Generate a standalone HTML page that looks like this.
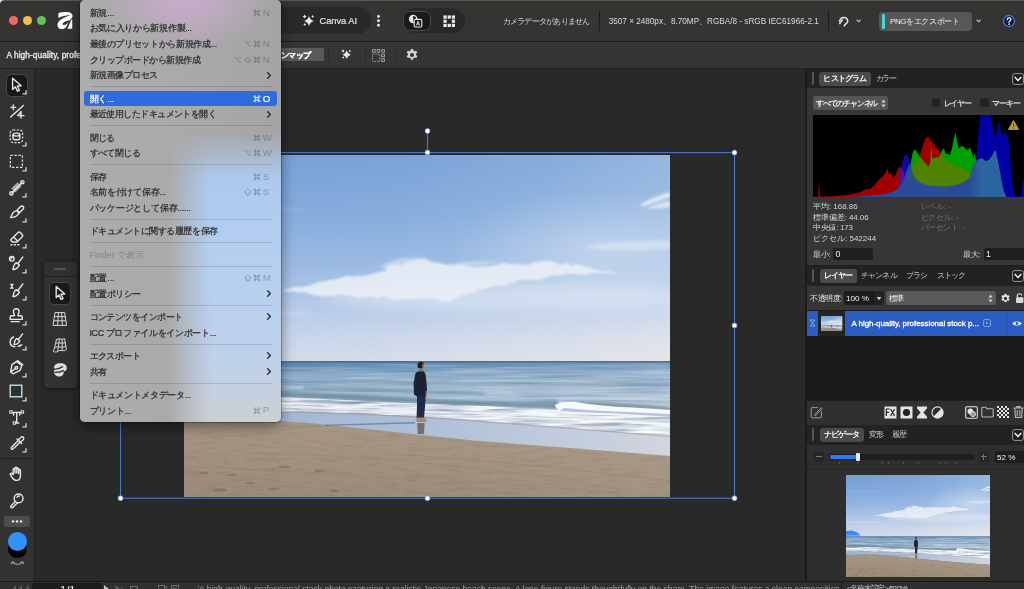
<!DOCTYPE html>
<html lang="ja">
<head>
<meta charset="utf-8">
<title>Affinity</title>
<style>
*{box-sizing:border-box;margin:0;padding:0}
html,body{width:1024px;height:589px;overflow:hidden;background:#2a2a2a}
body{font-family:"Liberation Sans",sans-serif;font-size:9px;color:#ddd;position:relative;-webkit-font-smoothing:antialiased}
.abs{position:absolute}
#titlebar{left:0;top:0;width:1024px;height:42px;background:#353433;border-bottom:1px solid #1c1c1c}
#ctxbar{left:0;top:42px;width:1024px;height:26.5px;background:#353535;border-bottom:1px solid #1e1e1e}
#tools{left:0;top:68px;width:35px;height:513px;background:#323232;border-right:1px solid #1f1f1f}
#canvas{left:35px;top:68px;width:770px;height:513px;background:#292929}
#rpanel{left:805px;top:68px;width:219px;height:513px;background:#1f1f1f}
#status{left:0;top:580.6px;width:1024px;height:10px;background:#2f2f2f;border-top:1px solid #1a1a1a}
.tl{width:9px;height:9px;border-radius:50%;top:16px}
.pill{background:#292929;border-radius:13.5px;top:7.4px;height:26.6px}
.ttxt{top:15px;font-size:8.6px;color:#dcdcdc;white-space:nowrap;line-height:12px}
.vsep{width:1px;background:#1c1c1c}
.tab{background:#4a4a4a;border-radius:3px;color:#fff;font-weight:bold;font-size:8.4px;line-height:13.5px;text-align:center;white-space:nowrap;overflow:hidden}
.tabx{color:#c8c8c8;font-size:8.4px;line-height:13.5px;white-space:nowrap}
.jt{font-size:8.4px;line-height:12px;white-space:nowrap}
.st{font-size:8.8px;line-height:12px;white-space:nowrap;color:#d6d6d6}
/* menu */
#menu{left:80px;top:0;width:201px;height:422px;border-radius:5px;overflow:hidden;padding-top:4.8px;
 box-shadow:0 4px 14px rgba(0,0,0,.45),0 0 0 .5px rgba(0,0,0,.5);background:#acacac;color:#2c2c2c;font-size:9.2px;-webkit-text-stroke:.22px #2c2c2c}
#menu .bg{position:absolute;left:0;top:0;width:100%;height:100%}
.mi{position:relative;height:15.6px;line-height:15.6px;padding-left:9.5px;white-space:nowrap}
.mi>span:first-child{position:relative;top:1.1px}
.mi .sc{position:absolute;right:8.6px;top:0;color:rgba(40,40,40,.32);letter-spacing:.3px;-webkit-text-stroke:0}
.mi .ar{position:absolute;right:9.3px;top:4.4px;width:6px;height:7px}
.mi.dis{color:rgba(40,40,40,.3);-webkit-text-stroke:0}
.mi.hl{color:#fff;-webkit-text-stroke:.22px #fff}
.mi.hl:before{content:"";position:absolute;left:3.5px;right:4px;top:0;bottom:0;border-radius:3px;background:#2f6bdc;z-index:-1}
.mi.hl .sc{color:#fff;-webkit-text-stroke:.2px #fff}
.ms{position:relative;height:7.8px}
.ms:before{content:"";position:absolute;left:9.5px;right:9.5px;top:3.5px;height:1px;background:rgba(0,0,0,.13)}
.mi .sc svg.k{display:inline-block;vertical-align:-0.9px;margin-right:1.8px}
.mi .sc b{font-weight:normal;display:inline-block;width:9.6px;text-align:left;font-size:9.6px;letter-spacing:0}
#menu .bg{background:
 radial-gradient(ellipse 80px 50px at 108px -2px, rgba(208,172,212,.85), rgba(208,172,212,.5) 45%, rgba(208,172,212,0) 100%),
 linear-gradient(90deg,#acacac 0,#a9a9a9 60%,#a4a4a6 100%)}
#menu .bh{position:absolute;left:0;top:0;width:100%;height:100%;-webkit-mask-image:linear-gradient(90deg,transparent 88px,rgba(0,0,0,.5) 108px,#000 132px);mask-image:linear-gradient(90deg,transparent 88px,rgba(0,0,0,.5) 108px,#000 132px)}
#menu .bv{position:absolute;left:0;top:0;width:100%;height:100%;-webkit-mask-image:linear-gradient(180deg,transparent 132px,rgba(0,0,0,.5) 154px,#000 180px);mask-image:linear-gradient(180deg,transparent 132px,rgba(0,0,0,.5) 154px,#000 180px);
 background:linear-gradient(180deg,#a9c6ea 0,#adcaee 180px,#b7d0f0 280px,#bed1ea 360px,#c8d0dc 400px,#ccd0d6 422px)}
.mwrap{position:relative;z-index:1}
</style>
</head>
<body>
<div id="root" style="position:absolute;left:0;top:0;width:1024px;height:589px;overflow:hidden;will-change:transform">
<div id="titlebar" class="abs"></div>
<div id="ctxbar" class="abs"></div>
<div id="tools" class="abs"></div>
<div id="canvas" class="abs"></div>
<div id="rpanel" class="abs"></div>
<div id="status" class="abs"></div>
<div class="abs" id="ctxline" style="left:0;top:67.8px;width:1024px;height:1.2px;background:#222"></div>
<div class="abs" id="topline" style="left:0;top:0;width:1024px;height:1.2px;background:linear-gradient(180deg,#66665f,#4a4a47)"></div>
<svg class="abs" style="left:0;top:0" width="5" height="5" viewBox="0 0 5 5"><path d="M0 0 H4.2 C1.6 .4 .4 1.6 0 4.2Z" fill="#e8e8e8"/></svg>
<!--PHOTO-->
<svg width="0" height="0" style="position:absolute">
<defs>
<linearGradient id="skyV" x1="0" y1="0" x2="0" y2="1">
 <stop offset="0" stop-color="#749fd6"/>
 <stop offset=".3" stop-color="#84abdc"/>
 <stop offset=".52" stop-color="#98b8e2"/>
 <stop offset=".72" stop-color="#b3c9e8"/>
 <stop offset=".88" stop-color="#c6d4eb"/>
 <stop offset="1" stop-color="#d2dbea"/>
</linearGradient>
<linearGradient id="skyH" x1="0" y1="0" x2="1" y2="0">
 <stop offset="0" stop-color="#fff" stop-opacity="0"/>
 <stop offset=".45" stop-color="#fff" stop-opacity=".04"/>
 <stop offset=".75" stop-color="#fff" stop-opacity=".13"/>
 <stop offset="1" stop-color="#fff" stop-opacity=".24"/>
</linearGradient>
<radialGradient id="hazeR"><stop offset="0" stop-color="#e9eef6" stop-opacity=".4"/><stop offset=".5" stop-color="#e9eef6" stop-opacity=".2"/><stop offset="1" stop-color="#e9eef6" stop-opacity="0"/></radialGradient>
<linearGradient id="hzn" x1="0" y1="0" x2="1" y2="0">
 <stop offset="0" stop-color="#e2e2e8" stop-opacity="0"/>
 <stop offset=".2" stop-color="#e2e2e8" stop-opacity=".05"/>
 <stop offset=".55" stop-color="#e4e3e7" stop-opacity=".4"/>
 <stop offset="1" stop-color="#e8e5e4" stop-opacity=".8"/>
</linearGradient>
<linearGradient id="hznV" x1="0" y1="0" x2="0" y2="1">
 <stop offset="0" stop-color="#000"/><stop offset="1" stop-color="#fff"/>
</linearGradient>
<mask id="hznM"><rect x="0" y="150" width="486" height="58" fill="url(#hznV)"/></mask>
<linearGradient id="seaV" x1="0" y1="206" x2="0" y2="252" gradientUnits="userSpaceOnUse">
 <stop offset="0" stop-color="#4f7ea8"/>
 <stop offset=".1" stop-color="#668fb6"/>
 <stop offset=".3" stop-color="#88a8c5"/>
 <stop offset=".55" stop-color="#9db7ce"/>
 <stop offset="1" stop-color="#adc2d4"/>
</linearGradient>
<linearGradient id="seaH" x1="0" y1="0" x2="1" y2="0">
 <stop offset="0" stop-color="#fff" stop-opacity="0"/>
 <stop offset=".5" stop-color="#fff" stop-opacity=".04"/>
 <stop offset="1" stop-color="#fff" stop-opacity=".16"/>
</linearGradient>
<linearGradient id="sandV" x1="0" y1="262" x2="0" y2="342" gradientUnits="userSpaceOnUse">
 <stop offset="0" stop-color="#a69685"/>
 <stop offset=".35" stop-color="#a39380"/>
 <stop offset="1" stop-color="#9a8a77"/>
</linearGradient>
<linearGradient id="wetH" x1="0" y1="0" x2="1" y2="0">
 <stop offset="0" stop-color="#9cb3d2"/>
 <stop offset=".5" stop-color="#adbfd8"/>
 <stop offset=".8" stop-color="#bfcadb"/>
 <stop offset="1" stop-color="#cdd2db"/>
</linearGradient>
<filter id="b6" x="-20%" y="-60%" width="140%" height="220%"><feGaussianBlur stdDeviation="6"/></filter>
<filter id="b3" x="-20%" y="-60%" width="140%" height="220%"><feGaussianBlur stdDeviation="1.5"/></filter>
<filter id="b1" x="-10%" y="-60%" width="120%" height="220%"><feGaussianBlur stdDeviation="1"/></filter>
<filter id="b05" x="-10%" y="-60%" width="120%" height="220%"><feGaussianBlur stdDeviation=".5"/></filter>
<filter id="cloudF" x="-10%" y="-60%" width="120%" height="220%">
 <feTurbulence type="fractalNoise" baseFrequency="0.035 0.09" numOctaves="3" seed="9" result="t"/>
 <feDisplacementMap in="SourceGraphic" in2="t" scale="9" xChannelSelector="R" yChannelSelector="G"/>
 <feGaussianBlur stdDeviation="1.1"/>
</filter>
<filter id="foamN" x="0" y="0" width="100%" height="100%" color-interpolation-filters="sRGB">
 <feTurbulence type="fractalNoise" baseFrequency="0.018 0.3" numOctaves="3" seed="7"/>
 <feColorMatrix type="matrix" values="0 0 0 0 1  0 0 0 0 1  0 0 0 0 1  3.2 0 0 0 -1.35"/>
</filter>
<filter id="foamD" x="0" y="0" width="100%" height="100%" color-interpolation-filters="sRGB">
 <feTurbulence type="fractalNoise" baseFrequency="0.02 0.35" numOctaves="2" seed="21"/>
 <feColorMatrix type="matrix" values="0 0 0 0 .42  0 0 0 0 .52  0 0 0 0 .62  3 0 0 0 -1.45"/>
</filter>
<filter id="seaN" x="0" y="0" width="100%" height="100%" color-interpolation-filters="sRGB">
 <feTurbulence type="fractalNoise" baseFrequency="0.012 0.4" numOctaves="3" seed="3"/>
 <feColorMatrix type="matrix" values="0 0 0 0 .9  0 0 0 0 .94  0 0 0 0 .98  2.4 0 0 0 -1.1"/>
</filter>
<filter id="seaD" x="0" y="0" width="100%" height="100%" color-interpolation-filters="sRGB">
 <feTurbulence type="fractalNoise" baseFrequency="0.012 0.4" numOctaves="3" seed="11"/>
 <feColorMatrix type="matrix" values="0 0 0 0 .22  0 0 0 0 .36  0 0 0 0 .5  2.4 0 0 0 -1.15"/>
</filter>
<filter id="sandN" x="0" y="0" width="100%" height="100%" color-interpolation-filters="sRGB">
 <feTurbulence type="fractalNoise" baseFrequency="0.05 0.3" numOctaves="3" seed="5"/>
 <feColorMatrix type="matrix" values="0 0 0 0 .42  0 0 0 0 .35  0 0 0 0 .28  1.6 0 0 0 -.78"/>
</filter>
<clipPath id="foamClip"><path d="M0 241 C40 241 80 241 120 243 C180 246 240 249 296 251 C340 253 400 256 486 260 L486 281 C420 276 360 271 296 266 C230 261 160 258 97 256.6 C60 256 30 256 0 256Z"/></clipPath>
<clipPath id="sandClip"><path d="M0 267 L97 266 C130 268 160 271.5 191 275 L289 285.4 L386.6 293 L486 301 L486 342 L0 342Z"/></clipPath>
<symbol id="photo" viewBox="0 0 486 342" preserveAspectRatio="none">
 <rect width="486" height="208" fill="url(#skyV)"/>
 <rect width="486" height="208" fill="url(#skyH)"/>
 <rect y="150" width="486" height="58" fill="url(#hzn)" mask="url(#hznM)"/>
 <!-- haze -->
 <ellipse cx="420" cy="95" rx="150" ry="60" fill="url(#hazeR)"/>
 <ellipse cx="330" cy="142" rx="190" ry="14" fill="#e4eaf4" opacity=".55" filter="url(#b6)"/>
 <ellipse cx="60" cy="159" rx="70" ry="3" fill="#e4eaf4" opacity=".3" filter="url(#b3)"/>
 <ellipse cx="60" cy="55" rx="60" ry="4" fill="#e4eaf4" opacity=".1" filter="url(#b3)"/>
 <!-- main cloud -->
 <g filter="url(#cloudF)" fill="#ecf0f7" opacity=".9">
  <path d="M99 135.5 C118 131 136 128 154 124.6 C172 121 188 119 200 116 C205 112 208 110 212 109 C222 105 236 103.5 247 104.5 C256 105.5 262 111 270 111.4 C290 111 310 109.4 328 109 C345 108.4 358 107.8 369 108 C380 108.4 388 109.4 394 110.4 C408 112 422 114.4 434 116.4 C418 117.6 402 118.2 386 119.2 C370 120.6 354 122.4 340 124.8 C322 128 306 131.4 293 134.8 C284 138 277 141.4 270 143.4 C261 145.6 251 145.4 241 145 C222 144.6 202 143 183 142 C165 141.4 147 141.4 131 140.5 C119 139.6 107 138.6 99 137Z" opacity=".95"/>
 </g>
 <g filter="url(#b3)" fill="#eef2f8" opacity=".55"><path d="M196 112 C206 106 220 102 236 102 C226 105 214 109 204 114Z"/><path d="M262 110 C280 106 300 106 320 107 C300 109 280 111 266 113Z"/></g>
 <g filter="url(#b3)" fill="#f5f7fb">
  <path d="M456 50 C466 44 476 40 486 37 L486 42 C476 45 468 48 460 51Z" opacity=".85"/>
  <path d="M462 54 C470 50 478 47 486 46 L486 52 C478 53 470 54 462 54Z" opacity=".7"/>
  <path d="M398 92 C425 87 458 85 486 85 L486 94 C458 96 425 96 398 92Z" opacity=".38"/>
 </g>
 <!-- sea -->
 <rect y="206" width="486" height="60" fill="url(#seaV)"/>
 <rect y="206" width="486" height="60" fill="url(#seaH)"/>
 <rect y="209" width="486" height="40" filter="url(#seaN)" opacity=".4"/>
 <rect y="209" width="486" height="40" filter="url(#seaD)" opacity=".3"/>
 <rect y="206.2" width="486" height="1.3" fill="#3c6a94" opacity=".9"/>
 <g filter="url(#b1)">
  <path d="M0 218 L486 217 L486 219 L0 220.5Z" fill="#b5c8d8" opacity=".22"/>
  <path d="M0 226 C160 225 320 229 486 228 L486 230 C320 231 160 227 0 228.5Z" fill="#4c7496" opacity=".35"/>
  <path d="M0 235 C50 233 100 236 150 238 C200 241 250 244 300 246 C330 247 350 246 372 245 L380 254 C350 253 320 252 290 251 C240 249 180 246 120 243 C80 241 40 241 0 241Z" fill="#55788f" opacity=".6"/>
  <path d="M120 231 C180 232 240 236 300 238 L300 240 C240 239 180 235 120 234Z" fill="#587d9c" opacity=".5"/>
  <path d="M380 247 C420 246 460 250 486 252 L486 256 C460 254 420 252 380 252Z" fill="#5d7a86" opacity=".6"/>
 </g>
 <!-- wet sand -->
 <path d="M0 254 L97 255 L296 264 L486 279 L486 302 L386 294 L289 286 L191 276 L97 267 L0 268Z" fill="url(#wetH)"/>
 <!-- foam -->
 <g filter="url(#b05)">
  <path d="M0 241 C40 241 80 241 120 243 C180 246 240 249 296 251 C340 253 400 256 486 260 L486 281 C420 276 360 271 296 266 C230 261 160 258 97 256.6 C60 256 30 256 0 256Z" fill="#cfd8e3"/>
  <path d="M0 246 C60 246 140 249 220 253 C300 257 400 262 486 268 L486 271 C400 266 300 261 220 257 C140 253 60 250 0 250Z" fill="#f0f3f7" opacity=".75"/>
  <path d="M0 243 C60 243 120 245 200 249 L200 250.5 C120 247 60 245 0 245Z" fill="#8ea3b8" opacity=".6"/>
  <path d="M0 255 C40 255 70 255.4 97 256 C160 257.4 230 260.4 296 265.4 C360 270.4 420 275.4 486 280.4 L486 282 C420 277 360 272 296 267 C230 262 160 259 97 257.6 C60 257 30 257 0 257Z" fill="#9a9088" opacity=".6"/>
 </g>
 <g clip-path="url(#foamClip)"><rect y="238" width="486" height="46" filter="url(#foamD)" opacity=".7"/><rect y="238" width="486" height="46" filter="url(#foamN)" opacity=".9"/></g>
 <!-- crest -->
 <g filter="url(#b05)">
  <path d="M371 250 C378 246 388 246 398 248 C420 252 450 252 486 255 L486 262 C450 261 410 260 385 259 C378 258 372 255 371 250Z" fill="#f7f9fc"/>
  <path d="M376 256 C400 258 440 258 486 262 L486 259 C450 257 410 256 380 253Z" fill="#9db2dc" opacity=".75"/>
 </g>
 <!-- sand -->
 <path d="M0 267 L97 266 C130 268 160 271.5 191 275 L289 285.4 L386.6 293 L486 301 L486 342 L0 342Z" fill="url(#sandV)"/>
 <rect y="262" width="486" height="80" fill="url(#seaH)" opacity=".5"/>
 <g clip-path="url(#sandClip)"><rect y="264" width="486" height="78" filter="url(#sandN)" opacity=".26"/></g>
 <g stroke="#8a7864" stroke-width=".8" fill="none" opacity=".38">
  <path d="M60 298 C160 300 280 310 400 326"/>
  <path d="M0 312 C100 314 200 322 300 334"/>
  <path d="M220 300 C320 306 420 318 486 326"/>
  <path d="M240 322 C320 328 380 334 440 338"/>
 </g>
 <g fill="#7a6854" opacity=".55">
  <ellipse cx="20" cy="318" rx="5" ry="1.3"/><ellipse cx="48" cy="320" rx="5" ry="1.3"/>
  <ellipse cx="100" cy="312" rx="6" ry="1.3"/><ellipse cx="135" cy="316" rx="5" ry="1.2"/>
  <ellipse cx="36" cy="335" rx="7" ry="1.6"/><ellipse cx="90" cy="334" rx="6" ry="1.4"/>
  <ellipse cx="150" cy="336" rx="5" ry="1.2"/><ellipse cx="66" cy="328" rx="5" ry="1.2"/>
 </g>
 <!-- person -->
 <path d="M141 269.8 L231 267 L231 268.6 L141 271Z" fill="#4f6488" opacity=".6"/>
 <g>
  <path d="M233.2 268 L240.6 268 L240 279 L233.8 279Z" fill="#6a5950" opacity=".8"/>
  <path d="M232.4 262 L240.6 262 L242.6 265.6 L242.4 267 L232.6 267Z" fill="#a58673"/>
  <path d="M233 240 L241.8 240 L241 252 L240 262.4 L232.6 262.4 L233 252Z" fill="#1f2a48"/>
  <path d="M231.4 218.4 C233 216.2 236 215.6 238.6 216 C240.6 216.4 241.4 218.4 241.8 221 L243 234 L242.6 240.6 L240 241.6 L233 241.6 L230 239.6 L229.6 228Z" fill="#1c2234"/>
  <path d="M241.8 236 L243.2 236 L243 242.6 L241.6 242.6Z" fill="#a58673"/>
  <ellipse cx="236.8" cy="210.2" rx="3.3" ry="3.5" fill="#1d1f27"/>
  <path d="M238.6 208.6 C239.8 208.6 240.4 210 240.2 211.6 C240 213 239.2 213.8 238.2 213.6Z" fill="#a07f6c"/>
  <rect x="235" y="213" width="3.4" height="3.4" fill="#8b6e5e"/>
 </g>
</symbol>
</defs>
</svg>
<svg class="abs" style="left:184px;top:155px" width="486" height="342"><use href="#photo" width="486" height="342"/></svg>
<!--/PHOTO-->
<!--SEL-->
<svg class="abs" style="left:0;top:0" width="1024" height="589" viewBox="0 0 1024 589">
 <g fill="none" stroke="#4a78c8" stroke-width="1.1">
  <rect x="120.5" y="152.6" width="614" height="345.6"/>
  <path d="M427.5 131 V152.6"/>
 </g>
 <g fill="#fff" stroke="#5a8ae0" stroke-width=".7">
  <circle cx="427.5" cy="131" r="2.5"/>
  <circle cx="427.5" cy="152.6" r="2.5"/>
  <circle cx="734.5" cy="152.6" r="2.5"/>
  <circle cx="734.5" cy="325.4" r="2.5"/>
  <circle cx="734.5" cy="498.2" r="2.5"/>
  <circle cx="427.5" cy="498.2" r="2.5"/>
  <circle cx="120.5" cy="498.2" r="2.5"/>
  <circle cx="120.5" cy="325.4" r="2.5"/>
  <circle cx="120.5" cy="152.6" r="2.5"/>
 </g>
</svg>
<!-- STATUS -->
<div class="abs" style="left:31.5px;top:582.6px;width:70px;height:8px;background:#1c1c1c;border-radius:2px 2px 0 0"></div>
<div class="abs" style="left:0;top:583.4px;width:1024px;height:12px;font-size:8px;line-height:12px;color:#c8c8c8;white-space:nowrap">
 <span class="abs" style="left:60px;top:.8px;color:#f0f0f0;font-size:10px"><span style="font-size:11.15px;font-weight:normal;letter-spacing:0.00px">1/1</span></span>
 <span class="abs" style="left:197.5px;color:#a0a0a0"><span style="font-size:8.49px;font-weight:normal;letter-spacing:0.00px">'A high-quality, professional stock photo capturing a realistic Japanese beach scene. A lone figure stands thoughtfully on the shore. The image features a clean composition</span></span>
 <span class="abs" style="left:847px;color:#d0d0d0"><span style="font-size:7.6px;font-weight:normal;letter-spacing:-1.19px">&lt;名称未設定&gt; (52.0%)</span></span>
</div>
<svg class="abs" style="left:0;top:583.6px" width="200" height="7" viewBox="0 0 200 7">
 <g fill="#5a5a5a"><path d="M16 6 L11 6 L16 1Z M22 6 L17 6 L22 1Z"/><path d="M29 6 L24 6 L29 1Z"/></g>
 <path d="M104 1 L110 6 L104 8Z" fill="#c8c8c8"/><path d="M116 2 L121 6 L116 8Z M122 2 V7" fill="#5a5a5a" stroke="#5a5a5a" stroke-width="1"/>
 <g fill="none" stroke="#6e6e6e" stroke-width="1"><rect x="130.5" y="2.5" width="7" height="6"/><rect x="158.5" y="1.5" width="6" height="7"/><path d="M165 3 H167 V8"/><rect x="171.5" y="1.5" width="7" height="7"/><path d="M173 4 H177 M173 6.5 H177"/></g>
</svg>
<div class="abs" style="left:841px;top:581.5px;width:1px;height:9px;background:#1c1c1c"></div>
<!--/SEL-->
<!-- TITLEBAR CONTENT -->
<div class="abs tl" style="left:9px;background:#ee6a5f"></div>
<div class="abs tl" style="left:23px;background:#f5bd4f"></div>
<div class="abs tl" style="left:37px;background:#61c455"></div>
<svg class="abs" style="left:50px;top:6px" width="30" height="30" viewBox="0 0 589 589" fill="#fff">
 <path d="M165 140 C250 115 380 108 425 150 C452 176 446 216 420 246 C398 270 368 302 322 402 C300 442 240 466 190 446 C144 426 134 360 166 314 C200 270 292 214 402 184 C342 174 250 196 165 236Z"/>
 <path d="M395 282 C340 290 270 310 250 345 C240 370 270 385 300 370 C340 350 375 315 395 282Z" fill="#353433"/>
 <path d="M416 268 L437 262 L437 447 L342 447Z"/>
</svg>
<div class="abs pill" style="left:262px;width:108.5px"></div>
<svg class="abs" style="left:301px;top:13.1px" width="16" height="16" viewBox="0 0 16 16" fill="#e8e8e8"><path d="M8.00 3.10 Q9.08 6.92 12.90 8.00 Q9.08 9.08 8.00 12.90 Q6.92 9.08 3.10 8.00 Q6.92 6.92 8.00 3.10 Z"/><path d="M3.60 1.60 Q4.20 3.00 5.60 3.60 Q4.20 4.20 3.60 5.60 Q3.00 4.20 1.60 3.60 Q3.00 3.00 3.60 1.60 Z"/><path d="M11.70 2.10 Q12.15 3.15 13.20 3.60 Q12.15 4.05 11.70 5.10 Q11.25 4.05 10.20 3.60 Q11.25 3.15 11.70 2.10 Z"/><path d="M3.80 9.90 Q4.25 10.95 5.30 11.40 Q4.25 11.85 3.80 12.90 Q3.35 11.85 2.30 11.40 Q3.35 10.95 3.80 9.90 Z"/></svg>
<div class="abs ttxt" style="left:319.5px;top:14.5px;color:#e2e2e2;-webkit-text-stroke:.2px #e2e2e2"><span style="font-size:9.26px;font-weight:normal;letter-spacing:0.00px">Canva AI</span></div>
<svg class="abs" style="left:376px;top:14px" width="5" height="14" viewBox="0 0 5 14" fill="#e8e8e8"><circle cx="2.5" cy="2.4" r="1.45"/><circle cx="2.5" cy="6.8" r="1.45"/><circle cx="2.5" cy="11.2" r="1.45"/></svg>
<div class="abs pill" style="left:401.8px;width:63px;top:8.2px;height:25.2px"></div>
<div class="abs" style="left:403.3px;top:10.8px;width:27.3px;height:20.6px;border-radius:7px;background:#1a1a1a;border:1px solid #484848"></div>
<svg class="abs" style="left:408.4px;top:13.6px" width="15" height="14" viewBox="0 0 15 14">
 <circle cx="5.2" cy="5" r="3.6" fill="none" stroke="#e8e8e8" stroke-width="1.4"/>
 <path d="M5.2 1.4 A3.6 3.6 0 0 0 5.2 8.6Z" fill="#e8e8e8"/>
 <rect x="6.2" y="5.4" width="7.6" height="7.6" rx="1.2" fill="#161616" stroke="#e8e8e8" stroke-width="1.1"/>
 <path d="M8.4 11.4 L10 7.2 L11.6 11.4 M9 10.1 L11 10.1" fill="none" stroke="#e8e8e8" stroke-width=".9"/>
</svg>
<svg class="abs" style="left:442.8px;top:14.8px" width="12.5" height="12.5" viewBox="0 0 14 14" fill="#ececec">
 <rect x=".5" y=".5" width="3.6" height="3.6"/><rect x="5.2" y=".5" width="3.6" height="3.6"/><rect x="9.9" y=".5" width="3.6" height="3.6"/>
 <rect x=".5" y="5.2" width="3.6" height="3.6"/><rect x="9.9" y="5.2" width="3.6" height="3.6"/>
 <rect x=".5" y="9.9" width="3.6" height="3.6"/><rect x="5.2" y="9.9" width="3.6" height="3.6"/><rect x="9.9" y="9.9" width="3.6" height="3.6"/>
</svg>
<div class="abs ttxt" style="left:502.5px"><span style="font-size:7.8px;font-weight:normal;letter-spacing:-0.74px">カメラデータがありません</span></div>
<div class="abs vsep" style="left:599px;top:11px;height:20px"></div>
<div class="abs ttxt" style="left:608.7px"><span style="font-size:8.2px;font-weight:normal;letter-spacing:-0.01px">3507 × 2480px、8.70MP、RGBA/8 - sRGB IEC61966-2.1</span></div>
<div class="abs vsep" style="left:828px;top:11px;height:20px"></div>
<svg class="abs" style="left:837px;top:14.6px" width="13.4" height="12.5" viewBox="0 0 15 14" fill="none" stroke="#e8e8e8" stroke-width="1.7" stroke-linecap="round" stroke-linejoin="round">
 <path d="M3 7.2 C3.4 4.4 5.6 2.6 8.2 2.8 C10.6 3 12.2 4.8 12 7 C11.8 8.6 10.6 9.6 9.4 10.4 L8.2 12.2"/>
 <path d="M3 9.6 L6 5.4"/>
</svg>
<svg class="abs" style="left:855.6px;top:19.4px" width="5.4" height="3.9" viewBox="0 0 7 5" fill="none" stroke="#d0d0d0" stroke-width="1.3" stroke-linecap="round" stroke-linejoin="round"><path d="M1.2 1.2 L3.5 3.6 L5.8 1.2"/></svg>
<div class="abs" style="left:879px;top:12px;width:93px;height:19px;border-radius:4px;background:#575757"></div>
<div class="abs" style="left:882px;top:14px;width:2.5px;height:15px;border-radius:1px;background:#45d6dc"></div>
<div class="abs ttxt" style="left:890px;color:#f0f0f0"><span style="font-size:8px;font-weight:normal;letter-spacing:-0.37px">PNGをエクスポート</span></div>
<svg class="abs" style="left:975.6px;top:19.4px" width="5.4" height="3.9" viewBox="0 0 7 5" fill="none" stroke="#d0d0d0" stroke-width="1.3" stroke-linecap="round" stroke-linejoin="round"><path d="M1.2 1.2 L3.5 3.6 L5.8 1.2"/></svg>
<svg class="abs" style="left:1002px;top:14.2px" width="14" height="14" viewBox="0 0 16 16">
 <circle cx="8" cy="8" r="6.3" fill="#0f1830" stroke="#3f78ea" stroke-width="1.5"/>
 <path d="M6 6.4 C6 5 6.9 4.3 8.1 4.3 C9.3 4.3 10.2 5.1 10.2 6.2 C10.2 7.7 8.1 7.8 8.1 9.5" fill="none" stroke="#fff" stroke-width="1.4" stroke-linecap="round"/>
 <circle cx="8.1" cy="11.6" r=".95" fill="#fff"/>
</svg>
<!-- CONTEXT BAR CONTENT -->
<div class="abs" style="left:6.4px;top:49.4px;font-size:8.6px;line-height:12px;color:#ececec;white-space:nowrap;width:75px;overflow:hidden;-webkit-text-stroke:.3px #ececec"><span style="font-size:8.3px;font-weight:normal;letter-spacing:0.09px">A high-quality, professional stock p...</span></div>
<div class="abs" style="left:262px;top:47.5px;width:61.5px;height:13.5px;background:#5a5a5a"></div>
<div class="abs" style="left:280.5px;top:48.5px;font-size:8.6px;line-height:12px;color:#fff;white-space:nowrap;-webkit-text-stroke:.25px #fff"><span style="font-size:7.8px;font-weight:bold;letter-spacing:-0.49px">ンマップ</span></div>
<div class="abs vsep" style="left:328px;top:46px;height:17px;background:#2c2c2c"></div>
<svg class="abs" style="left:339.6px;top:48.4px" width="13.4" height="13.4" viewBox="0 0 16 16" fill="#e8e8e8"><path d="M8.00 3.10 Q9.08 6.92 12.90 8.00 Q9.08 9.08 8.00 12.90 Q6.92 9.08 3.10 8.00 Q6.92 6.92 8.00 3.10 Z"/><path d="M3.60 1.60 Q4.20 3.00 5.60 3.60 Q4.20 4.20 3.60 5.60 Q3.00 4.20 1.60 3.60 Q3.00 3.00 3.60 1.60 Z"/><path d="M11.70 2.10 Q12.15 3.15 13.20 3.60 Q12.15 4.05 11.70 5.10 Q11.25 4.05 10.20 3.60 Q11.25 3.15 11.70 2.10 Z"/><path d="M3.80 9.90 Q4.25 10.95 5.30 11.40 Q4.25 11.85 3.80 12.90 Q3.35 11.85 2.30 11.40 Q3.35 10.95 3.80 9.90 Z"/></svg>
<div class="abs vsep" style="left:365px;top:46px;height:17px;background:#2c2c2c"></div>
<svg class="abs" style="left:372px;top:48.5px" width="13" height="13" viewBox="0 0 13 13" fill="none" stroke="#a8a8a8" stroke-width=".9">
 <rect x=".6" y=".6" width="2.6" height="2.6"/><rect x="5.2" y=".6" width="2.6" height="2.6"/><rect x="9.8" y=".6" width="2.6" height="2.6"/>
 <rect x=".6" y="5.2" width="7.2" height="7.2" stroke-dasharray="1.6 1"/>
 <rect x="9.8" y="5.2" width="2.6" height="2.6"/><rect x="9.8" y="9.8" width="2.6" height="2.6"/>
</svg>
<div class="abs vsep" style="left:395px;top:46px;height:17px;background:#2c2c2c"></div><div class="abs vsep" style="left:420px;top:46px;height:17px;background:#2e2e2e"></div>
<svg class="abs" style="left:405px;top:48px" width="14" height="14" viewBox="0 0 24 24" fill="#d6d6d6">
 <path d="M10.2 1.5 h3.6 l.6 3 a8 8 0 0 1 2 1.15 l2.9 -1 1.8 3.1 -2.3 2 a8 8 0 0 1 0 2.3 l2.3 2 -1.8 3.1 -2.9 -1 a8 8 0 0 1 -2 1.15 l-.6 3 h-3.6 l-.6 -3 a8 8 0 0 1 -2 -1.15 l-2.9 1 -1.8 -3.1 2.3 -2 a8 8 0 0 1 0 -2.3 l-2.3 -2 1.8 -3.1 2.9 1 a8 8 0 0 1 2 -1.15 Z M12 8.4 a3.6 3.6 0 1 0 0 7.2 a3.6 3.6 0 0 0 0 -7.2Z" fill-rule="evenodd"/>
</svg>
<!-- TOOLS -->
<div class="abs" style="left:5.6px;top:73.5px;width:22.8px;height:23px;border-radius:5.5px;background:#181818;border:1px solid #484848"></div>
<svg class="abs" style="left:8px;top:76.0px;overflow:visible" width="18" height="18" viewBox="0 0 18 18"><path d="M4.6 2.2 L4.6 13.4 L7.4 10.8 L9.4 15.2 L11.4 14.3 L9.4 10 L13.2 9.8 Z" fill="none" stroke="#e6e6e6" stroke-width="1.4" stroke-linecap="round" stroke-linejoin="round"/><path d="M18 14.2 V17.8 H14.4" fill="none" stroke="#d4d4d4" stroke-width="1.3"/></svg>
<svg class="abs" style="left:8px;top:102.0px;overflow:visible" width="18" height="18" viewBox="0 0 18 18"><path d="M2.6 15 L15.4 3.4" fill="none" stroke="#e6e6e6" stroke-width="1.4" stroke-linecap="round" stroke-linejoin="round"/><path d="M3 5.4 H7.6 M5.3 3 V7.8" fill="none" stroke="#e6e6e6" stroke-width="1.4" stroke-linecap="round" stroke-linejoin="round"/><path d="M13 9.6 V16 M9.8 13.6 H16 M9.8 13.6 L13 9.6" fill="none" stroke="#e6e6e6" stroke-width="1.4" stroke-linecap="round" stroke-linejoin="round"/></svg>
<svg class="abs" style="left:8px;top:127.5px;overflow:visible" width="18" height="18" viewBox="0 0 18 18"><rect x="2.2" y="2" width="12.4" height="12.6" rx="3" fill="none" stroke="#e2e2e2" stroke-width="1.2" stroke-dasharray="2.2 1.4"/><ellipse cx="8.4" cy="6.6" rx="3.4" ry="1.5" fill="none" stroke="#e6e6e6" stroke-width="1.4" stroke-linecap="round" stroke-linejoin="round"/><path d="M5 6.6 V10.2 C5 11.2 6.6 11.8 8.4 11.8 C10.2 11.8 11.8 11.2 11.8 10.2 V6.6" fill="none" stroke="#e6e6e6" stroke-width="1.4" stroke-linecap="round" stroke-linejoin="round"/><path d="M18 14.2 V17.8 H14.4" fill="none" stroke="#d4d4d4" stroke-width="1.3"/></svg>
<svg class="abs" style="left:8px;top:153.0px;overflow:visible" width="18" height="18" viewBox="0 0 18 18"><rect x="2.4" y="2.4" width="12" height="12" fill="none" stroke="#e2e2e2" stroke-width="1.25" stroke-dasharray="2.4 1.6"/><path d="M18 14.2 V17.8 H14.4" fill="none" stroke="#d4d4d4" stroke-width="1.3"/></svg>
<svg class="abs" style="left:8px;top:178.7px;overflow:visible" width="18" height="18" viewBox="0 0 18 18"><path d="M3.2 9.6 L9.6 3.2 L13.6 7.2 L7.2 13.6Z" fill="#cfcfcf" opacity=".75" stroke="none"/><path d="M4 14 L14 3.6" fill="none" stroke="#e6e6e6" stroke-width="1.4" stroke-linecap="round" stroke-linejoin="round"/><circle cx="3.4" cy="14.4" r="1.6" fill="none" stroke="#e6e6e6" stroke-width="1.4" stroke-linecap="round" stroke-linejoin="round"/><circle cx="14.4" cy="3.2" r="1.6" fill="none" stroke="#e6e6e6" stroke-width="1.4" stroke-linecap="round" stroke-linejoin="round"/><path d="M18 14.2 V17.8 H14.4" fill="none" stroke="#d4d4d4" stroke-width="1.3"/></svg>
<svg class="abs" style="left:8px;top:204.4px;overflow:visible" width="18" height="18" viewBox="0 0 18 18"><path d="M9.2 6 L12.6 2.6 C13.4 1.8 14.6 1.8 15.2 2.6 C15.9 3.3 15.8 4.4 15 5.2 L11.6 8.6 Z" fill="none" stroke="#e6e6e6" stroke-width="1.4" stroke-linecap="round" stroke-linejoin="round"/><path d="M8.6 6.6 L11.2 9.2 L9.8 10.6 C8.2 12.6 5.4 13.6 2.6 13.6 C3.8 12.4 3.6 10.6 5 8.8 C6 7.6 7.4 7 8.6 6.6Z" fill="none" stroke="#e6e6e6" stroke-width="1.4" stroke-linecap="round" stroke-linejoin="round"/><path d="M18 14.2 V17.8 H14.4" fill="none" stroke="#d4d4d4" stroke-width="1.3"/></svg>
<svg class="abs" style="left:8px;top:230.0px;overflow:visible" width="18" height="18" viewBox="0 0 18 18"><path d="M3 9.6 L9.8 2.8 C10.6 2 11.8 2 12.6 2.8 L14 4.2 C14.8 5 14.8 6.2 14 7 L9 12 H4.6 L3 10.6 C2.7 10.3 2.7 9.9 3 9.6Z M5.6 7 L9.6 11" fill="none" stroke="#e6e6e6" stroke-width="1.4" stroke-linecap="round" stroke-linejoin="round"/><path d="M2.4 14.8 H12" fill="none" stroke="#e2e2e2" stroke-width="1.4" stroke-dasharray="2.2 1.2"/><path d="M18 14.2 V17.8 H14.4" fill="none" stroke="#d4d4d4" stroke-width="1.3"/></svg>
<svg class="abs" style="left:8px;top:255.4px;overflow:visible" width="18" height="18" viewBox="0 0 18 18"><circle cx="3.8" cy="3.8" r="2.3" fill="none" stroke="#e6e6e6" stroke-width="1.4" stroke-linecap="round" stroke-linejoin="round"/><path d="M2.3 5.2 A2.3 2.3 0 0 1 5.4 2.2Z" fill="#e2e2e2"/><path d="M14.8 2 L10 8.4" fill="none" stroke="#e6e6e6" stroke-width="1.4" stroke-linecap="round" stroke-linejoin="round"/><path d="M8.2 7.6 L11.4 10 L10.2 11.8 C9 13.6 7 14.6 4.8 14.6 C5.6 13.4 5.2 11.8 6.2 10 C6.8 8.8 7.4 8.2 8.2 7.6Z" fill="none" stroke="#e6e6e6" stroke-width="1.4" stroke-linecap="round" stroke-linejoin="round"/><path d="M18 14.2 V17.8 H14.4" fill="none" stroke="#d4d4d4" stroke-width="1.3"/></svg>
<svg class="abs" style="left:8px;top:282.0px;overflow:visible" width="18" height="18" viewBox="0 0 18 18"><path d="M1.8 1.8 H6 L4.4 4.2 L6 6.8 H1.8 L3.4 4.2Z" fill="#e2e2e2"/><path d="M14.8 2 L10 8.4" fill="none" stroke="#e6e6e6" stroke-width="1.4" stroke-linecap="round" stroke-linejoin="round"/><path d="M8.2 7.6 L11.4 10 L10.2 11.8 C9 13.6 7 14.6 4.8 14.6 C5.6 13.4 5.2 11.8 6.2 10 C6.8 8.8 7.4 8.2 8.2 7.6Z" fill="none" stroke="#e6e6e6" stroke-width="1.4" stroke-linecap="round" stroke-linejoin="round"/><path d="M18 14.2 V17.8 H14.4" fill="none" stroke="#d4d4d4" stroke-width="1.3"/></svg>
<svg class="abs" style="left:8px;top:306.7px;overflow:visible" width="18" height="18" viewBox="0 0 18 18"><path d="M6.4 8.8 C6.8 7.6 5.4 6.4 5.4 4.6 C5.4 3 6.6 1.8 8.2 1.8 C9.8 1.8 11 3 11 4.6 C11 6.4 9.6 7.6 10 8.8 H13 C13.8 8.8 14.2 9.4 14.2 10 V12.4 H2.2 V10 C2.2 9.4 2.6 8.8 3.4 8.8Z" fill="none" stroke="#e6e6e6" stroke-width="1.4" stroke-linecap="round" stroke-linejoin="round"/><path d="M3 14.6 H11.4" fill="none" stroke="#e6e6e6" stroke-width="1.4" stroke-linecap="round" stroke-linejoin="round"/><path d="M18 14.2 V17.8 H14.4" fill="none" stroke="#d4d4d4" stroke-width="1.3"/></svg>
<svg class="abs" style="left:8px;top:332.4px;overflow:visible" width="18" height="18" viewBox="0 0 18 18"><path d="M14.6 1.8 L10.4 7.4" fill="none" stroke="#e6e6e6" stroke-width="1.4" stroke-linecap="round" stroke-linejoin="round"/><path d="M8.6 6.4 L11.8 8.8 L10.6 10.6 C9.6 12 8 12.6 6 12.6 C6.6 11.6 6.2 10.4 7 8.8 C7.4 7.8 8 7 8.6 6.4Z" fill="none" stroke="#e6e6e6" stroke-width="1.4" stroke-linecap="round" stroke-linejoin="round"/><path d="M5.6 5 C3.4 6 2 8 2.2 10.4 C2.4 12.8 4.4 14.6 6.8 14.8" fill="none" stroke="#e6e6e6" stroke-width="1.4" stroke-linecap="round" stroke-linejoin="round"/><path d="M9 15 C11 15.4 13.6 14.6 14.6 12.6 C13 11.6 11 12.6 9 15Z" fill="#e2e2e2"/><path d="M18 14.2 V17.8 H14.4" fill="none" stroke="#d4d4d4" stroke-width="1.3"/></svg>
<svg class="abs" style="left:8px;top:358.5px;overflow:visible" width="18" height="18" viewBox="0 0 18 18"><path d="M8.6 2.4 L13.8 6.4 L12 11.4 L5 14.8 L2.6 13 L4 5.6Z M2.8 13 L7.4 9.6" fill="none" stroke="#e6e6e6" stroke-width="1.4" stroke-linecap="round" stroke-linejoin="round"/><circle cx="8.4" cy="8.8" r="1.3" fill="none" stroke="#e6e6e6" stroke-width="1.4" stroke-linecap="round" stroke-linejoin="round"/><path d="M9.4 1.6 L14.8 5.8" fill="none" stroke="#e6e6e6" stroke-width="1.4" stroke-linecap="round" stroke-linejoin="round"/><path d="M18 14.2 V17.8 H14.4" fill="none" stroke="#d4d4d4" stroke-width="1.3"/></svg>
<svg class="abs" style="left:8px;top:383.2px;overflow:visible" width="18" height="18" viewBox="0 0 18 18"><rect x="2.2" y="2.2" width="11.6" height="11.6" fill="#253238" stroke="#e2e2e2" stroke-width="1.3"/><path d="M18 14.2 V17.8 H14.4" fill="none" stroke="#d4d4d4" stroke-width="1.3"/></svg>
<svg class="abs" style="left:8px;top:408.6px;overflow:visible" width="18" height="18" viewBox="0 0 18 18"><path d="M3.4 3.4 H14 M8.7 3.4 V14 M5.6 3.4 V6 M11.8 3.4 V6 M6.6 14 H10.8" fill="none" stroke="#e6e6e6" stroke-width="1.4" stroke-linecap="round" stroke-linejoin="round"/><rect x="1.8" y="1.8" width="2.4" height="2.4" fill="#323232" stroke="#e2e2e2" stroke-width="1"/><rect x="13.2" y="1.8" width="2.4" height="2.4" fill="#323232" stroke="#e2e2e2" stroke-width="1"/><rect x="5.2" y="12.8" width="2.4" height="2.4" fill="#323232" stroke="#e2e2e2" stroke-width="1"/><path d="M18 14.2 V17.8 H14.4" fill="none" stroke="#d4d4d4" stroke-width="1.3"/></svg>
<svg class="abs" style="left:8px;top:434.2px;overflow:visible" width="18" height="18" viewBox="0 0 18 18"><path d="M10.4 6 L12.8 3.4 C13.6 2.6 14.8 2.6 15.4 3.3 C16 4 15.9 5 15.2 5.8 L12.6 8.2" fill="none" stroke="#e6e6e6" stroke-width="1.4" stroke-linecap="round" stroke-linejoin="round"/><path d="M9 5 L13.6 9.4" fill="none" stroke="#e6e6e6" stroke-width="1.4" stroke-linecap="round" stroke-linejoin="round"/><path d="M10 6.8 L3.6 13.2 C3 13.8 3 14.6 3.4 15 C3.8 15.4 4.6 15.4 5.2 14.8 L11.8 8.4" fill="none" stroke="#e6e6e6" stroke-width="1.4" stroke-linecap="round" stroke-linejoin="round"/><path d="M18 14.2 V17.8 H14.4" fill="none" stroke="#d4d4d4" stroke-width="1.3"/></svg>
<svg class="abs" style="left:8px;top:465.0px;overflow:visible" width="18" height="18" viewBox="0 0 18 18"><path d="M5.2 9.6 V4.4 C5.2 3.2 7 3.2 7 4.4 V8 V3.2 C7 2 8.8 2 8.8 3.2 V8 V3.8 C8.8 2.6 10.6 2.6 10.6 3.8 V8.4 V5.4 C10.6 4.2 12.4 4.2 12.4 5.4 V10.8 C12.4 13.6 10.8 15.4 8.4 15.4 C6.4 15.4 5.2 14.4 4 12.4 L2.4 9.6 C1.8 8.6 3.2 7.6 4 8.6Z" fill="none" stroke="#e6e6e6" stroke-width="1.4" stroke-linecap="round" stroke-linejoin="round"/></svg>
<svg class="abs" style="left:8px;top:491.5px;overflow:visible" width="18" height="18" viewBox="0 0 18 18"><circle cx="10.6" cy="6.4" r="4.4" fill="none" stroke="#e6e6e6" stroke-width="1.4" stroke-linecap="round" stroke-linejoin="round"/><path d="M7.4 9.6 L3 14 C2.4 14.6 2.8 15.6 3.4 15.8 C4 16 4.4 15.8 4.8 15.4 L9.2 11" fill="none" stroke="#e6e6e6" stroke-width="1.4" stroke-linecap="round" stroke-linejoin="round"/><path d="M9 5.4 C9.4 4.4 10.4 3.8 11.4 4" fill="none" stroke="#e6e6e6" stroke-width="1.4" stroke-linecap="round" stroke-linejoin="round"/></svg>
<div class="abs" style="left:2px;top:458px;width:30px;height:1px;background:#1e1e1e"></div>
<div class="abs" style="left:4px;top:516px;width:26px;height:10.5px;border-radius:2px;background:#4d4d4d"></div>
<svg class="abs" style="left:11px;top:519px" width="12" height="5" viewBox="0 0 12 5" fill="#f2f2f2"><circle cx="2" cy="2.4" r="1.2"/><circle cx="6" cy="2.4" r="1.2"/><circle cx="10" cy="2.4" r="1.2"/></svg>
<div class="abs" style="left:7.2px;top:538.8px;width:20.4px;height:20.4px;border-radius:50%;background:#000;border:1px solid #3c3c3c"></div>
<div class="abs" style="left:7.7px;top:531.5px;width:19.4px;height:19.4px;border-radius:50%;background:#3590fb"></div>
<svg class="abs" style="left:10px;top:559px" width="15" height="8" viewBox="0 0 15 8" fill="none" stroke="#9a9a9a" stroke-width="1.1" stroke-linecap="round" stroke-linejoin="round"><path d="M2.4 3.4 C4.6 6 10.4 6 12.6 3.4"/><path d="M1.4 4.8 L2.2 2.8 L4.2 3.4 M13.6 4.8 L12.8 2.8 L10.8 3.4"/></svg>
<div class="abs" style="left:43.5px;top:262px;width:33px;height:126px;border-radius:4px;background:#313131;box-shadow:0 1px 5px rgba(0,0,0,.5)"></div>
<div class="abs" style="left:43.5px;top:275.5px;width:33px;height:1px;background:#222"></div>
<div class="abs" style="left:54px;top:267.5px;width:12px;height:2px;border-radius:1px;background:#545454"></div>
<div class="abs" style="left:49px;top:282px;width:22px;height:22.5px;border-radius:5px;background:#1a1a1a;border:1px solid #444"></div>
<svg class="abs" style="left:51px;top:284px" width="18" height="18" viewBox="0 0 18 18"><path d="M5.2 2.4 L5.2 13.6 L8 11 L10 15.4 L12 14.5 L10 10.2 L13.8 10 Z" fill="none" stroke="#e6e6e6" stroke-width="1.4" stroke-linecap="round" stroke-linejoin="round"/></svg>
<svg class="abs" style="left:51px;top:310px" width="18" height="18" viewBox="0 0 18 18"><path d="M4.4 2.6 H13.6 L15.6 15.4 H2.4Z M7.4 2.6 L6.6 15.4 M10.6 2.6 L11.4 15.4 M3.8 6.6 H14.2 M3.2 10.8 H14.8" fill="none" stroke="#d8d8d8" stroke-width="1" stroke-linecap="round" stroke-linejoin="round"/></svg>
<svg class="abs" style="left:51px;top:335.6px" width="18" height="18" viewBox="0 0 18 18"><path d="M5.4 3.6 C8 1.6 10.4 4.4 13.6 2.6 L15.4 13.8 C12.6 16 9.6 13 6.6 15.6 C5 16.4 3.2 16 2.4 15.4 C3.6 12 4.6 8 5.4 3.6Z M8.4 3 C8 7 7.4 11 6.6 15.4 M11.2 3.6 C11.4 7 11.4 11 11 14.4 M4.6 7.4 C7.4 5.6 10.8 8.4 14.2 6.6 M3.6 11.4 C6.8 9.6 11 12.6 14.8 10.4" fill="none" stroke="#d8d8d8" stroke-width="1" stroke-linecap="round" stroke-linejoin="round"/></svg>
<svg class="abs" style="left:51px;top:361.4px" width="18" height="18" viewBox="0 0 18 18"><path d="M3 7.6 C2.6 4.4 5.6 2 9 2.4 C12.6 2 16 4 15.8 7.4 C15.8 9.4 14 10.2 12.4 10.6 C13.4 12.8 11.4 15.6 8.6 15.6 C5.6 15.8 3 13.6 3.2 11 C3.3 9.8 3.2 8.8 3 7.6Z" fill="#dedede"/><path d="M3 8 C6 8.6 9 7.4 11.6 5.6 M4 11.4 C7 11.6 10 10.8 12.4 9.6" fill="none" stroke="#343434" stroke-width="1.3" stroke-linecap="round"/></svg>
<!-- /TOOLS -->
<!-- RIGHT -->
<div class="abs" style="left:805px;top:68px;width:2px;height:513px;background:#1b1b1b"></div>
<div class="abs" style="left:807px;top:68px;width:217px;height:20px;background:#222"></div>
<div class="abs" style="left:807px;top:88px;width:217px;height:176.5px;background:#363636"></div>
<div class="abs" style="left:811.5px;top:72px;width:2.5px;height:13px;border-radius:1px;background:#555"></div>
<div class="abs tab" style="left:819px;top:72px;width:52px;height:13.5px"><span style="font-size:7.8px;font-weight:bold;letter-spacing:-0.78px">ヒストグラム</span></div>
<div class="abs tabx" style="left:875.5px;top:72px"><span style="font-size:7.8px;font-weight:normal;letter-spacing:-1.09px">カラー</span></div>
<svg class="abs" style="left:1012px;top:72.5px" width="12" height="12" viewBox="0 0 12 12"><rect x=".6" y=".6" width="10.8" height="10.8" rx="2" fill="#1c1c1c" stroke="#9a9a9a" stroke-width="1"/><path d="M3.2 4.4 L6 7.6 L8.8 4.4" fill="none" stroke="#f0f0f0" stroke-width="1.5" stroke-linecap="round" stroke-linejoin="round"/></svg>
<div class="abs" style="left:812.5px;top:96px;width:75.5px;height:14px;border-radius:2.5px;background:#555"></div>
<div class="abs jt" style="left:816px;top:97px;color:#f0f0f0"><span style="font-size:7.8px;font-weight:bold;letter-spacing:-1.21px">すべてのチャンネル</span></div>
<svg class="abs" style="left:880.5px;top:98.5px" width="5" height="9" viewBox="0 0 5 9" fill="#d0d0d0"><path d="M2.5 .6 L4.6 3.4 H.4Z M2.5 8.4 L4.6 5.6 H.4Z"/></svg>
<div class="abs" style="left:931.5px;top:98px;width:8.5px;height:8.5px;border-radius:1.5px;background:#222"></div>
<div class="abs jt" style="left:943.5px;top:97px;color:#d8d8d8"><span style="font-size:7.8px;font-weight:bold;letter-spacing:-1.04px">レイヤー</span></div>
<div class="abs" style="left:980px;top:98px;width:8.5px;height:8.5px;border-radius:1.5px;background:#222"></div>
<div class="abs jt" style="left:992px;top:97px;color:#d8d8d8"><span style="font-size:7.8px;font-weight:bold;letter-spacing:-1.12px">マーキー</span></div>
<svg class="abs" style="left:813px;top:114.5px" width="211" height="82" viewBox="0 0 211 82">
<defs><linearGradient id="stl" x1="0" y1="0" x2="211" y2="0" gradientUnits="userSpaceOnUse"><stop offset=".74" stop-color="#2a4b96"/><stop offset=".8" stop-color="#2c64a0"/><stop offset="1" stop-color="#2c64a0"/></linearGradient></defs>
<rect width="211" height="82" fill="#000"/>
<polygon points="160.7,82.0 162.4,58.0 163.3,42.9 165.0,21.4 166.7,6.4 167.6,-2.2 177.9,-2.2 179.2,8.5 180.9,21.0 182.9,19.7 184.4,12.8 185.6,6.0 186.9,7.7 188.2,21.0 190.4,18.4 193.0,17.6 195.1,23.6 196.8,40.8 198.5,62.2 200.0,75.1 202.0,81.2 205.8,81.6 208.0,81.2 208.9,70.8 209.9,66.1 211.0,64.4 212.3,64.4 212.3,82.0" fill="#0000a4"/>
<polygon points="84.7,82.0 87.2,58.0 89.4,47.2 91.1,41.8 93.1,39.0 95.2,41.8 97.1,48.9 98.4,58.0 99.7,82.0" fill="#0a0aa8"/>
<polygon points="0.0,82.0 5.2,81.6 6.0,64.4 7.1,81.6 16.8,81.2 34.0,79.9 46.9,77.3 53.3,74.1 57.6,73.4 61.9,69.8 66.2,64.4 69.4,61.8 72.6,58.0 74.4,53.2 75.9,59.0 78.0,58.0 80.2,63.3 83.4,58.0 86.6,51.1 88.8,55.8 92.0,64.4 98.4,64.4 102.7,49.8 107.0,39.7 110.2,28.9 112.4,23.6 115.2,21.4 117.8,25.7 121.0,28.9 124.2,34.3 126.8,36.5 128.5,39.7 132.8,45.1 141.4,49.4 150.0,53.7 157.5,58.0 157.5,82.0" fill="#a00000"/>
<polygon points="97.8,82.0 97.8,47.2 99.5,38.6 101.6,34.3 103.8,36.5 107.0,41.8 111.3,47.2 115.6,51.9 117.5,47.2 118.2,30.0 119.3,44.0 122.1,42.9 126.4,41.8 128.5,36.5 130.6,33.2 132.8,38.6 137.1,39.7 139.2,32.2 141.4,21.4 142.5,17.6 144.0,25.7 145.7,33.2 148.9,31.1 151.1,32.2 154.3,35.4 156.9,32.2 158.6,36.5 160.7,44.0 162.2,36.5 162.9,45.1 162.9,82.0" fill="#00a000"/>
<polygon points="98.4,82.0 98.4,58.0 100.6,49.8 102.7,49.8 104.9,45.1 107.0,42.1 111.3,47.2 115.6,51.9 117.5,47.2 118.2,30.5 119.3,44.0 122.1,42.9 126.4,41.8 128.5,39.9 132.8,45.1 141.4,49.4 150.0,53.7 157.5,58.0 157.5,82.0" fill="#4f8200"/>
<polygon points="84.7,82.0 87.2,58.0 89.0,51.1 90.3,55.8 92.4,64.4 94.1,67.6 94.1,82.0" fill="#5010a0"/>
<polygon points="34.0,82.0 55.5,80.7 72.6,79.0 81.2,76.2 85.5,73.0 88.8,68.7 92.0,61.2 95.2,51.5 97.8,48.3 99.5,58.0 102.7,64.4 107.0,67.6 115.6,70.4 124.2,71.3 132.8,71.7 141.4,70.4 150.0,67.6 156.4,63.3 158.6,55.8 160.7,49.4 162.9,46.1 166.1,44.0 169.3,43.3 172.5,46.1 175.8,45.1 179.0,40.8 181.1,36.5 182.9,35.4 184.4,42.9 186.5,53.7 188.7,66.5 190.8,76.2 193.0,81.2 194.0,82.0" fill="url(#stl)"/>
<path d="M200.5 5.6 L205.6 14.4 H195.4Z" fill="#b39a3a" stroke="#b39a3a" stroke-width="1" stroke-linejoin="round"/>
<path d="M200.5 8.4 V11.6 M200.5 12.8 V13.5" stroke="#4a3c10" stroke-width="1.1"/>
</svg>
<div class="abs st" style="left:813px;top:200.4px"><span style="font-size:8px;font-weight:normal;letter-spacing:-0.03px">平均: 168.86</span></div>
<div class="abs st" style="left:813px;top:210.9px"><span style="font-size:8px;font-weight:normal;letter-spacing:-0.08px">標準偏差: 44.06</span></div>
<div class="abs st" style="left:813px;top:221.4px"><span style="font-size:8px;font-weight:normal;letter-spacing:-0.27px">中央値: 173</span></div>
<div class="abs st" style="left:813px;top:231.9px"><span style="font-size:8px;font-weight:normal;letter-spacing:-0.00px">ピクセル: 542244</span></div>
<div class="abs st" style="left:920.5px;top:200.4px;color:#6f6f6f"><span style="font-size:8px;font-weight:normal;letter-spacing:-0.19px">レベル: -</span></div>
<div class="abs st" style="left:920.5px;top:210.9px;color:#6f6f6f"><span style="font-size:8px;font-weight:normal;letter-spacing:-0.17px">ピクセル: -</span></div>
<div class="abs st" style="left:920.5px;top:221.4px;color:#6f6f6f"><span style="font-size:8px;font-weight:normal;letter-spacing:-0.45px">パーセント: -</span></div>
<div class="abs st" style="left:813px;top:248px"><span style="font-size:8px;font-weight:normal;letter-spacing:-0.36px">最小:</span></div>
<div class="abs" style="left:833px;top:248px;width:40px;height:11.5px;border-radius:2px;background:#1e1e1e"></div>
<div class="abs st" style="left:835.5px;top:248px;color:#f2f2f2">0</div>
<div class="abs st" style="left:963px;top:248px"><span style="font-size:8px;font-weight:normal;letter-spacing:-0.36px">最大:</span></div>
<div class="abs" style="left:983.5px;top:248px;width:41px;height:11.5px;border-radius:2px 0 0 2px;background:#1e1e1e"></div>
<div class="abs st" style="left:986px;top:248px;color:#f2f2f2">1</div>
<div class="abs" style="left:807px;top:265.5px;width:217px;height:20px;background:#222"></div>
<div class="abs" style="left:811.5px;top:269px;width:2.5px;height:13px;border-radius:1px;background:#555"></div>
<div class="abs tab" style="left:819.5px;top:269px;width:37px;height:13.5px"><span style="font-size:7.8px;font-weight:bold;letter-spacing:-1.02px">レイヤー</span></div>
<div class="abs tabx" style="left:861px;top:269px"><span style="font-size:7.8px;font-weight:normal;letter-spacing:-0.84px">チャンネル</span></div>
<div class="abs tabx" style="left:906px;top:269px"><span style="font-size:7.8px;font-weight:normal;letter-spacing:-1.03px">ブラシ</span></div>
<div class="abs tabx" style="left:936.5px;top:269px"><span style="font-size:7.8px;font-weight:normal;letter-spacing:-0.87px">ストック</span></div>
<svg class="abs" style="left:1012px;top:269.5px" width="12" height="12" viewBox="0 0 12 12"><rect x=".6" y=".6" width="10.8" height="10.8" rx="2" fill="#1c1c1c" stroke="#9a9a9a" stroke-width="1"/><path d="M3.2 4.4 L6 7.6 L8.8 4.4" fill="none" stroke="#f0f0f0" stroke-width="1.5" stroke-linecap="round" stroke-linejoin="round"/></svg>
<div class="abs" style="left:807px;top:285.5px;width:217px;height:24.5px;background:#363636"></div>
<div class="abs st" style="left:810px;top:292.2px;color:#e2e2e2"><span style="font-size:8px;font-weight:normal;letter-spacing:-0.42px">不透明度:</span></div>
<div class="abs" style="left:844px;top:291px;width:40px;height:14px;border-radius:2px;background:#232323"></div><div class="abs" style="left:844px;top:291px;width:29.5px;height:14px;border-radius:2px;background:#1c1c1c"></div>
<div class="abs st" style="left:846px;top:292.2px;color:#f2f2f2"><span style="font-size:8.07px;font-weight:normal;letter-spacing:0.00px">100 %</span></div>
<svg class="abs" style="left:876px;top:296px" width="6" height="5" viewBox="0 0 6 5" fill="#cfcfcf"><path d="M.6 1 H5.4 L3 4.2Z"/></svg>
<div class="abs" style="left:885.5px;top:291px;width:110.5px;height:14px;border-radius:2.5px;background:#5a5a5a"></div>
<div class="abs st" style="left:889px;top:292.2px;color:#f2f2f2"><span style="font-size:7.8px;font-weight:normal;letter-spacing:-0.54px">標準</span></div>
<svg class="abs" style="left:988px;top:293.5px" width="5" height="9" viewBox="0 0 5 9" fill="#d0d0d0"><path d="M2.5 .6 L4.6 3.4 H.4Z M2.5 8.4 L4.6 5.6 H.4Z"/></svg>
<svg class="abs" style="left:1000px;top:292.5px" width="11" height="11" viewBox="0 0 24 24" fill="#e6e6e6"><path d="M10.2 1.5 h3.6 l.6 3 a8 8 0 0 1 2 1.15 l2.9 -1 1.8 3.1 -2.3 2 a8 8 0 0 1 0 2.3 l2.3 2 -1.8 3.1 -2.9 -1 a8 8 0 0 1 -2 1.15 l-.6 3 h-3.6 l-.6 -3 a8 8 0 0 1 -2 -1.15 l-2.9 1 -1.8 -3.1 2.3 -2 a8 8 0 0 1 0 -2.3 l-2.3 -2 1.8 -3.1 2.9 1 a8 8 0 0 1 2 -1.15 Z M12 8.4 a3.6 3.6 0 1 0 0 7.2 a3.6 3.6 0 0 0 0 -7.2Z" fill-rule="evenodd"/></svg>
<svg class="abs" style="left:1015px;top:291.5px" width="9" height="12" viewBox="0 0 9 12"><path d="M2.4 5.4 V3.4 C2.4 1.2 6.6 1.2 6.6 3.4" fill="none" stroke="#d8d8d8" stroke-width="1.2"/><rect x="1" y="5.2" width="7.4" height="5.8" rx="1" fill="#d8d8d8"/></svg>
<div class="abs" style="left:807px;top:310px;width:217px;height:90px;background:#1b1b1b"></div>
<div class="abs" style="left:806.5px;top:310.5px;width:217.5px;height:25.5px;background:#2b5cc4"></div>
<div class="abs" style="left:818px;top:310.5px;width:26.5px;height:25.5px;background:#242424"></div>
<svg class="abs" style="left:821px;top:316px" width="21.5" height="15"><use href="#photo" width="21.5" height="15"/></svg>
<svg class="abs" style="left:809px;top:319px" width="7" height="8" viewBox="0 0 7 8" fill="none" stroke="#8fb0ee" stroke-width=".8"><path d="M1 1 L6 7 M6 1 L1 7 M1 1 H6 M1 7 H6"/></svg>
<div class="abs" style="left:851.5px;top:317px;font-size:8.6px;line-height:12px;color:#fff;white-space:nowrap;-webkit-text-stroke:.3px #fff"><span style="font-size:8px;font-weight:normal;letter-spacing:-0.05px">A high-quality, professional stock p...</span></div>
<svg class="abs" style="left:983px;top:318.5px" width="8" height="8" viewBox="0 0 8 8" fill="none" stroke="#8aa6de" stroke-width=".9"><rect x=".6" y=".6" width="6.8" height="6.8" rx="1"/><path d="M3 2.6 L5.2 4 L3 5.4Z" fill="#8aa6de" stroke="none"/></svg>
<div class="abs" style="left:1006px;top:310.5px;width:1px;height:25.5px;background:#2450a8"></div>
<svg class="abs" style="left:1012px;top:319.5px" width="10" height="7" viewBox="0 0 10 7"><path d="M.4 3.5 C2 .8 8 .8 9.6 3.5 C8 6.2 2 6.2 .4 3.5Z" fill="#f4f4f4"/><circle cx="5" cy="3.5" r="1.5" fill="#2b5cc4"/></svg>
<div class="abs" style="left:807px;top:400.5px;width:217px;height:24px;background:#303030"></div>
<svg class="abs" style="left:810px;top:406px" width="13" height="13" viewBox="0 0 13 13" fill="none" stroke="#9c9c9c" stroke-width="1"><path d="M8 1.6 H2 C1.4 1.6 1.2 2 1.2 2.6 V11 C1.2 11.6 1.6 11.8 2 11.8 H10.4 C11 11.8 11.4 11.4 11.4 11 V5.2"/><path d="M5 8.2 L11.2 1.6 L12.2 2.6 L6 9 L4.6 9.4Z"/></svg>
<svg class="abs" style="left:884px;top:405.5px" width="13" height="13" viewBox="0 0 13 13"><rect x=".5" y=".5" width="12" height="12" fill="#e4e4e4"/><path d="M2.4 10 V3 H5.6 M2.4 6.4 H5 M6.6 3 L10.6 10 M10.6 3 L6.6 10" fill="none" stroke="#222" stroke-width="1.2"/></svg>
<svg class="abs" style="left:900px;top:405.5px" width="13" height="13" viewBox="0 0 13 13"><rect x=".5" y=".5" width="12" height="12" fill="#e4e4e4"/><circle cx="6.5" cy="6.5" r="3.6" fill="#222"/></svg>
<svg class="abs" style="left:916px;top:405.5px" width="12" height="13" viewBox="0 0 12 13"><path d="M1 .6 H11 V2.2 L7.4 6.5 L11 10.8 V12.4 H1 V10.8 L4.6 6.5 L1 2.2Z" fill="#e4e4e4"/></svg>
<svg class="abs" style="left:930.5px;top:405.5px" width="13" height="13" viewBox="0 0 13 13"><circle cx="6.5" cy="6.5" r="5.6" fill="none" stroke="#e4e4e4" stroke-width="1.1"/><path d="M10.5 2.5 A5.6 5.6 0 0 1 2.5 10.5Z" fill="#e4e4e4"/></svg>
<svg class="abs" style="left:964.5px;top:405.5px" width="13" height="13" viewBox="0 0 13 13"><rect x=".7" y=".7" width="11.6" height="11.6" rx="1.2" fill="none" stroke="#e4e4e4" stroke-width="1.1"/><circle cx="5.4" cy="5.4" r="2.8" fill="#e4e4e4"/><circle cx="8" cy="8" r="2.6" fill="#9a9a9a" stroke="#e4e4e4" stroke-width=".8"/></svg>
<svg class="abs" style="left:980.5px;top:406px" width="13" height="12" viewBox="0 0 13 12" fill="none" stroke="#b4b4b4" stroke-width="1.1" stroke-linejoin="round"><path d="M.8 2.2 C.8 1.6 1.2 1.2 1.8 1.2 H4.8 L6 2.8 H11.2 C11.8 2.8 12.2 3.2 12.2 3.8 V10 C12.2 10.6 11.8 11 11.2 11 H1.8 C1.2 11 .8 10.6 .8 10Z"/></svg>
<svg class="abs" style="left:996.5px;top:406px" width="12" height="12" viewBox="0 0 12 12" fill="#e4e4e4"><rect x="0" y="0" width="2" height="2"/><rect x="0" y="4" width="2" height="2"/><rect x="0" y="8" width="2" height="2"/><rect x="2" y="2" width="2" height="2"/><rect x="2" y="6" width="2" height="2"/><rect x="2" y="10" width="2" height="2"/><rect x="4" y="0" width="2" height="2"/><rect x="4" y="4" width="2" height="2"/><rect x="4" y="8" width="2" height="2"/><rect x="6" y="2" width="2" height="2"/><rect x="6" y="6" width="2" height="2"/><rect x="6" y="10" width="2" height="2"/><rect x="8" y="0" width="2" height="2"/><rect x="8" y="4" width="2" height="2"/><rect x="8" y="8" width="2" height="2"/><rect x="10" y="2" width="2" height="2"/><rect x="10" y="6" width="2" height="2"/><rect x="10" y="10" width="2" height="2"/></svg>
<svg class="abs" style="left:1013px;top:405px" width="11" height="14" viewBox="0 0 11 14" fill="none" stroke="#b8b8b8" stroke-width="1.1" stroke-linecap="round"><path d="M.8 3 H10.2 M3.8 3 V1.6 H7.2 V3 M1.8 3 L2.4 12.4 H8.6 L9.2 3 M4.2 5.4 V10.4 M6.8 5.4 V10.4"/></svg>
<div class="abs" style="left:807px;top:424.5px;width:217px;height:20px;background:#222"></div>
<div class="abs" style="left:811.5px;top:428px;width:2.5px;height:13px;border-radius:1px;background:#555"></div>
<div class="abs tab" style="left:819.5px;top:428px;width:44px;height:13.5px"><span style="font-size:7.8px;font-weight:bold;letter-spacing:-1.00px">ナビゲータ</span></div>
<div class="abs tabx" style="left:868.5px;top:428px"><span style="font-size:7.8px;font-weight:normal;letter-spacing:-0.79px">変形</span></div>
<div class="abs tabx" style="left:891.5px;top:428px"><span style="font-size:7.8px;font-weight:normal;letter-spacing:-0.84px">履歴</span></div>
<svg class="abs" style="left:1012px;top:428.5px" width="12" height="12" viewBox="0 0 12 12"><rect x=".6" y=".6" width="10.8" height="10.8" rx="2" fill="#1c1c1c" stroke="#9a9a9a" stroke-width="1"/><path d="M3.2 4.4 L6 7.6 L8.8 4.4" fill="none" stroke="#f0f0f0" stroke-width="1.5" stroke-linecap="round" stroke-linejoin="round"/></svg>
<div class="abs" style="left:807px;top:444.5px;width:217px;height:136.5px;background:#2e2e2e"></div>
<div class="abs" style="left:807px;top:469px;width:217px;height:1px;background:#262626"></div>
<div class="abs" style="left:813.5px;top:451.5px;width:10.5px;height:10.5px;border-radius:2px;background:#262626"></div>
<div class="abs" style="left:816px;top:456.3px;width:5.5px;height:1px;background:#777"></div>
<div class="abs" style="left:828.5px;top:453.5px;width:146px;height:6.5px;border-radius:3.5px;background:#1e1e1e"></div>
<div class="abs" style="left:829.5px;top:454.5px;width:28px;height:4.5px;border-radius:2.5px;background:#2f7df6"></div>
<div class="abs" style="left:856px;top:452.5px;width:3.5px;height:8.5px;border-radius:1px;background:#e8e8e8"></div>
<div class="abs" style="left:839px;top:462px;width:1px;height:2px;background:#555"></div>
<div class="abs" style="left:857px;top:462px;width:1px;height:2px;background:#555"></div>
<div class="abs" style="left:882px;top:462px;width:1px;height:2px;background:#555"></div>
<div class="abs" style="left:888px;top:462px;width:1px;height:2px;background:#555"></div>
<div class="abs" style="left:903px;top:462px;width:1px;height:2px;background:#555"></div>
<div class="abs" style="left:918px;top:462px;width:1px;height:2px;background:#555"></div>
<div class="abs" style="left:940px;top:462px;width:1px;height:2px;background:#555"></div>
<div class="abs" style="left:945px;top:462px;width:1px;height:2px;background:#555"></div>
<div class="abs" style="left:956px;top:462px;width:1px;height:2px;background:#555"></div>
<div class="abs" style="left:978.5px;top:451.5px;width:10.5px;height:10.5px;border-radius:2px;background:#262626"></div>
<div class="abs" style="left:981px;top:456.3px;width:5.5px;height:1px;background:#777"></div><div class="abs" style="left:983.3px;top:454px;width:1px;height:5.5px;background:#777"></div>
<div class="abs" style="left:995px;top:450.5px;width:29px;height:12.5px;border-radius:2px 0 0 2px;background:#1e1e1e"></div>
<div class="abs st" style="left:997px;top:451px;color:#f2f2f2"><span style="font-size:8.12px;font-weight:normal;letter-spacing:0.00px">52 %</span></div>
<svg class="abs" style="left:846px;top:475px" width="144" height="102"><use href="#photo" width="144" height="102"/></svg>
<svg class="abs" style="left:846px;top:529px" width="16" height="8" viewBox="0 0 16 8"><path d="M0 2 L6 1.6 C10 2.6 13 4.6 14.6 6.4 L0 6.8Z" fill="#3a8cf4"/></svg>
<!-- /RIGHT -->
<!-- MENUC -->
<div id="menu" class="abs">
<div class="bg"><div class="bh"><div class="bv"></div></div></div><div class="mwrap">
<div class="mi "><span style="font-size:8.8px;font-weight:normal;letter-spacing:-0.17px">新規...</span><span class="sc"><svg class="k" width="7.8" height="7.8" viewBox="0 0 10 10"><path d="M3.4 3.4 H6.6 V6.6 H3.4Z M3.4 3.4 V2.2 A1.2 1.2 0 1 0 2.2 3.4Z M6.6 3.4 H7.8 A1.2 1.2 0 1 0 6.6 2.2Z M6.6 6.6 V7.8 A1.2 1.2 0 1 0 7.8 6.6Z M3.4 6.6 H2.2 A1.2 1.2 0 1 0 3.4 7.8Z" fill="none" stroke="currentColor" stroke-width="1"/></svg><b>N</b></span></div>
<div class="mi "><span style="font-size:8.8px;font-weight:normal;letter-spacing:-0.30px">お気に入りから新規作製...</span></div>
<div class="mi "><span style="font-size:8.8px;font-weight:normal;letter-spacing:-0.35px">最後のプリセットから新規作成...</span><span class="sc"><svg class="k" width="7.8" height="7.8" viewBox="0 0 10 10"><path d="M.8 2.4 H3.6 L6.6 8 H9.4 M6.2 2.4 H9.4" fill="none" stroke="currentColor" stroke-width="1.05"/></svg><svg class="k" width="7.8" height="7.8" viewBox="0 0 10 10"><path d="M3.4 3.4 H6.6 V6.6 H3.4Z M3.4 3.4 V2.2 A1.2 1.2 0 1 0 2.2 3.4Z M6.6 3.4 H7.8 A1.2 1.2 0 1 0 6.6 2.2Z M6.6 6.6 V7.8 A1.2 1.2 0 1 0 7.8 6.6Z M3.4 6.6 H2.2 A1.2 1.2 0 1 0 3.4 7.8Z" fill="none" stroke="currentColor" stroke-width="1"/></svg><b>N</b></span></div>
<div class="mi "><span style="font-size:8.8px;font-weight:normal;letter-spacing:-0.47px">クリップボードから新規作成</span><span class="sc"><svg class="k" width="7.8" height="7.8" viewBox="0 0 10 10"><path d="M.8 2.4 H3.6 L6.6 8 H9.4 M6.2 2.4 H9.4" fill="none" stroke="currentColor" stroke-width="1.05"/></svg><svg class="k" width="7.8" height="7.8" viewBox="0 0 10 10"><path d="M5 1 L9.2 5.4 H7 V9 H3 V5.4 H.8Z" fill="none" stroke="currentColor" stroke-width="1" stroke-linejoin="round"/></svg><svg class="k" width="7.8" height="7.8" viewBox="0 0 10 10"><path d="M3.4 3.4 H6.6 V6.6 H3.4Z M3.4 3.4 V2.2 A1.2 1.2 0 1 0 2.2 3.4Z M6.6 3.4 H7.8 A1.2 1.2 0 1 0 6.6 2.2Z M6.6 6.6 V7.8 A1.2 1.2 0 1 0 7.8 6.6Z M3.4 6.6 H2.2 A1.2 1.2 0 1 0 3.4 7.8Z" fill="none" stroke="currentColor" stroke-width="1"/></svg><b>N</b></span></div>
<div class="mi "><span style="font-size:8.8px;font-weight:normal;letter-spacing:-0.46px">新規画像プロセス</span><svg class="ar" viewBox="0 0 6 7"><path d="M1.6 .8 L4.4 3.5 L1.6 6.2" fill="none" stroke="#2c2c2c" stroke-width="1.35" stroke-linecap="round" stroke-linejoin="round"/></svg></div>
<div class="ms"></div>
<div class="mi hl"><span style="font-size:8.8px;font-weight:normal;letter-spacing:-0.17px">開く...</span><span class="sc"><svg class="k" width="7.8" height="7.8" viewBox="0 0 10 10"><path d="M3.4 3.4 H6.6 V6.6 H3.4Z M3.4 3.4 V2.2 A1.2 1.2 0 1 0 2.2 3.4Z M6.6 3.4 H7.8 A1.2 1.2 0 1 0 6.6 2.2Z M6.6 6.6 V7.8 A1.2 1.2 0 1 0 7.8 6.6Z M3.4 6.6 H2.2 A1.2 1.2 0 1 0 3.4 7.8Z" fill="none" stroke="currentColor" stroke-width="1"/></svg><b>O</b></span></div>
<div class="mi "><span style="font-size:8.8px;font-weight:normal;letter-spacing:-0.55px">最近使用したドキュメントを開く</span><svg class="ar" viewBox="0 0 6 7"><path d="M1.6 .8 L4.4 3.5 L1.6 6.2" fill="none" stroke="#2c2c2c" stroke-width="1.35" stroke-linecap="round" stroke-linejoin="round"/></svg></div>
<div class="ms"></div>
<div class="mi "><span style="font-size:8.8px;font-weight:normal;letter-spacing:-0.60px">閉じる</span><span class="sc"><svg class="k" width="7.8" height="7.8" viewBox="0 0 10 10"><path d="M3.4 3.4 H6.6 V6.6 H3.4Z M3.4 3.4 V2.2 A1.2 1.2 0 1 0 2.2 3.4Z M6.6 3.4 H7.8 A1.2 1.2 0 1 0 6.6 2.2Z M6.6 6.6 V7.8 A1.2 1.2 0 1 0 7.8 6.6Z M3.4 6.6 H2.2 A1.2 1.2 0 1 0 3.4 7.8Z" fill="none" stroke="currentColor" stroke-width="1"/></svg><b>W</b></span></div>
<div class="mi "><span style="font-size:8.8px;font-weight:normal;letter-spacing:-0.55px">すべて閉じる</span><span class="sc"><svg class="k" width="7.8" height="7.8" viewBox="0 0 10 10"><path d="M.8 2.4 H3.6 L6.6 8 H9.4 M6.2 2.4 H9.4" fill="none" stroke="currentColor" stroke-width="1.05"/></svg><svg class="k" width="7.8" height="7.8" viewBox="0 0 10 10"><path d="M3.4 3.4 H6.6 V6.6 H3.4Z M3.4 3.4 V2.2 A1.2 1.2 0 1 0 2.2 3.4Z M6.6 3.4 H7.8 A1.2 1.2 0 1 0 6.6 2.2Z M6.6 6.6 V7.8 A1.2 1.2 0 1 0 7.8 6.6Z M3.4 6.6 H2.2 A1.2 1.2 0 1 0 3.4 7.8Z" fill="none" stroke="currentColor" stroke-width="1"/></svg><b>W</b></span></div>
<div class="ms"></div>
<div class="mi "><span style="font-size:8.8px;font-weight:normal;letter-spacing:-0.40px">保存</span><span class="sc"><svg class="k" width="7.8" height="7.8" viewBox="0 0 10 10"><path d="M3.4 3.4 H6.6 V6.6 H3.4Z M3.4 3.4 V2.2 A1.2 1.2 0 1 0 2.2 3.4Z M6.6 3.4 H7.8 A1.2 1.2 0 1 0 6.6 2.2Z M6.6 6.6 V7.8 A1.2 1.2 0 1 0 7.8 6.6Z M3.4 6.6 H2.2 A1.2 1.2 0 1 0 3.4 7.8Z" fill="none" stroke="currentColor" stroke-width="1"/></svg><b>S</b></span></div>
<div class="mi "><span style="font-size:8.8px;font-weight:normal;letter-spacing:-0.28px">名前を付けて保存...</span><span class="sc"><svg class="k" width="7.8" height="7.8" viewBox="0 0 10 10"><path d="M5 1 L9.2 5.4 H7 V9 H3 V5.4 H.8Z" fill="none" stroke="currentColor" stroke-width="1" stroke-linejoin="round"/></svg><svg class="k" width="7.8" height="7.8" viewBox="0 0 10 10"><path d="M3.4 3.4 H6.6 V6.6 H3.4Z M3.4 3.4 V2.2 A1.2 1.2 0 1 0 2.2 3.4Z M6.6 3.4 H7.8 A1.2 1.2 0 1 0 6.6 2.2Z M6.6 6.6 V7.8 A1.2 1.2 0 1 0 7.8 6.6Z M3.4 6.6 H2.2 A1.2 1.2 0 1 0 3.4 7.8Z" fill="none" stroke="currentColor" stroke-width="1"/></svg><b>S</b></span></div>
<div class="mi "><span style="font-size:8.8px;font-weight:normal;letter-spacing:-0.22px">パッケージとして保存......</span></div>
<div class="ms"></div>
<div class="mi "><span style="font-size:8.8px;font-weight:normal;letter-spacing:-0.46px">ドキュメントに関する履歴を保存</span></div>
<div class="ms"></div>
<div class="mi dis"><span style="font-size:8.8px;font-weight:normal;letter-spacing:0.03px">Finder で表示</span></div>
<div class="ms"></div>
<div class="mi "><span style="font-size:8.8px;font-weight:normal;letter-spacing:-0.09px">配置...</span><span class="sc"><svg class="k" width="7.8" height="7.8" viewBox="0 0 10 10"><path d="M5 1 L9.2 5.4 H7 V9 H3 V5.4 H.8Z" fill="none" stroke="currentColor" stroke-width="1" stroke-linejoin="round"/></svg><svg class="k" width="7.8" height="7.8" viewBox="0 0 10 10"><path d="M3.4 3.4 H6.6 V6.6 H3.4Z M3.4 3.4 V2.2 A1.2 1.2 0 1 0 2.2 3.4Z M6.6 3.4 H7.8 A1.2 1.2 0 1 0 6.6 2.2Z M6.6 6.6 V7.8 A1.2 1.2 0 1 0 7.8 6.6Z M3.4 6.6 H2.2 A1.2 1.2 0 1 0 3.4 7.8Z" fill="none" stroke="currentColor" stroke-width="1"/></svg><b>M</b></span></div>
<div class="mi "><span style="font-size:8.8px;font-weight:normal;letter-spacing:-0.48px">配置ポリシー</span><svg class="ar" viewBox="0 0 6 7"><path d="M1.6 .8 L4.4 3.5 L1.6 6.2" fill="none" stroke="#2c2c2c" stroke-width="1.35" stroke-linecap="round" stroke-linejoin="round"/></svg></div>
<div class="ms"></div>
<div class="mi "><span style="font-size:8.8px;font-weight:normal;letter-spacing:-0.55px">コンテンツをインポート</span><svg class="ar" viewBox="0 0 6 7"><path d="M1.6 .8 L4.4 3.5 L1.6 6.2" fill="none" stroke="#2c2c2c" stroke-width="1.35" stroke-linecap="round" stroke-linejoin="round"/></svg></div>
<div class="mi "><span style="font-size:8.8px;font-weight:normal;letter-spacing:-0.33px">ICC プロファイルをインポート...</span></div>
<div class="ms"></div>
<div class="mi "><span style="font-size:8.8px;font-weight:normal;letter-spacing:-0.55px">エクスポート</span><svg class="ar" viewBox="0 0 6 7"><path d="M1.6 .8 L4.4 3.5 L1.6 6.2" fill="none" stroke="#2c2c2c" stroke-width="1.35" stroke-linecap="round" stroke-linejoin="round"/></svg></div>
<div class="mi "><span style="font-size:8.8px;font-weight:normal;letter-spacing:-0.40px">共有</span><svg class="ar" viewBox="0 0 6 7"><path d="M1.6 .8 L4.4 3.5 L1.6 6.2" fill="none" stroke="#2c2c2c" stroke-width="1.35" stroke-linecap="round" stroke-linejoin="round"/></svg></div>
<div class="ms"></div>
<div class="mi "><span style="font-size:8.8px;font-weight:normal;letter-spacing:-0.36px">ドキュメントメタデータ...</span></div>
<div class="mi "><span style="font-size:8.8px;font-weight:normal;letter-spacing:-0.21px">プリント...</span><span class="sc"><svg class="k" width="7.8" height="7.8" viewBox="0 0 10 10"><path d="M3.4 3.4 H6.6 V6.6 H3.4Z M3.4 3.4 V2.2 A1.2 1.2 0 1 0 2.2 3.4Z M6.6 3.4 H7.8 A1.2 1.2 0 1 0 6.6 2.2Z M6.6 6.6 V7.8 A1.2 1.2 0 1 0 7.8 6.6Z M3.4 6.6 H2.2 A1.2 1.2 0 1 0 3.4 7.8Z" fill="none" stroke="currentColor" stroke-width="1"/></svg><b>P</b></span></div>
</div></div>
<!-- /MENUC -->
</div>
</body>
</html>
